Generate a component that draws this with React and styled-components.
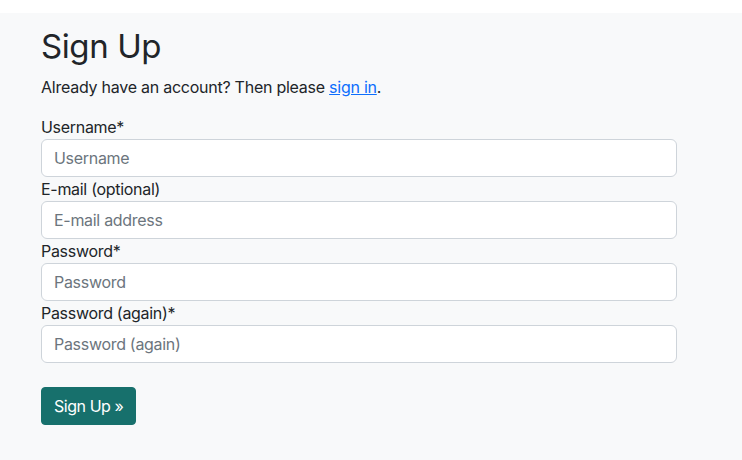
import React from "react";
import styled, { createGlobalStyle } from "styled-components";

const Global = createGlobalStyle`
  html, body { margin: 0; padding: 0; }
  body {
    font-family: Inter, "Noto Sans", "Liberation Sans", sans-serif;
    color: #212529;
    background: #ffffff;
    font-size: 16px;
    line-height: 1.5;
  }
  * { box-sizing: border-box; }
`;

const Page = styled.div`
  margin-top: 13px;
  background: #f8f9fa;
  min-height: 447px;
  padding: 14px 41px 0;
`;

const Title = styled.h1`
  margin: 0 0 8px;
  font-size: 33px;
  font-weight: 400;
  line-height: 1.2;
  letter-spacing: -0.4px;
`;

const Lead = styled.p`
  margin: 0 0 16px;
  font-size: 16px;
  letter-spacing: -0.25px;
`;

const Link = styled.a`
  color: #0d6efd;
  text-decoration: underline;
`;

const Form = styled.form`
  width: 636px;
  display: flex;
  flex-direction: column;
`;

const Label = styled.label`
  display: block;
  font-size: 16px;
  line-height: 24px;
  letter-spacing: -0.3px;
`;

const Input = styled.input`
  display: block;
  width: 100%;
  height: 38px;
  padding: 6px 12px;
  font: inherit;
  font-size: 16px;
  letter-spacing: -0.3px;
  color: #212529;
  background: #fff;
  border: 1px solid #ced4da;
  border-radius: 6px;
  outline: none;
  &::placeholder { color: #6c757d; }
`;

const Button = styled.button`
  align-self: flex-start;
  margin-top: 24px;
  height: 38px;
  padding: 6px 12px;
  font: inherit;
  font-size: 16px;
  letter-spacing: -0.45px;
  color: #fff;
  background: #17706c;
  border: 1px solid #17706c;
  border-radius: 4px;
`;

const fields = [
  { label: "Username*", ph: "Username" },
  { label: "E-mail (optional)", ph: "E-mail address" },
  { label: "Password*", ph: "Password" },
  { label: "Password (again)*", ph: "Password (again)" },
];

export default function App() {
  return (
    <>
      <Global />
      <Page>
        <Title>Sign Up</Title>
        <Lead>
          Already have an account? Then please <Link href="#">sign in</Link>.
        </Lead>
        <Form onSubmit={(e) => e.preventDefault()}>
          {fields.map((f) => (
            <div key={f.label}>
              <Label>{f.label}</Label>
              <Input type="text" placeholder={f.ph} />
            </div>
          ))}
          <Button type="submit">Sign Up »</Button>
        </Form>
      </Page>
    </>
  );
}
